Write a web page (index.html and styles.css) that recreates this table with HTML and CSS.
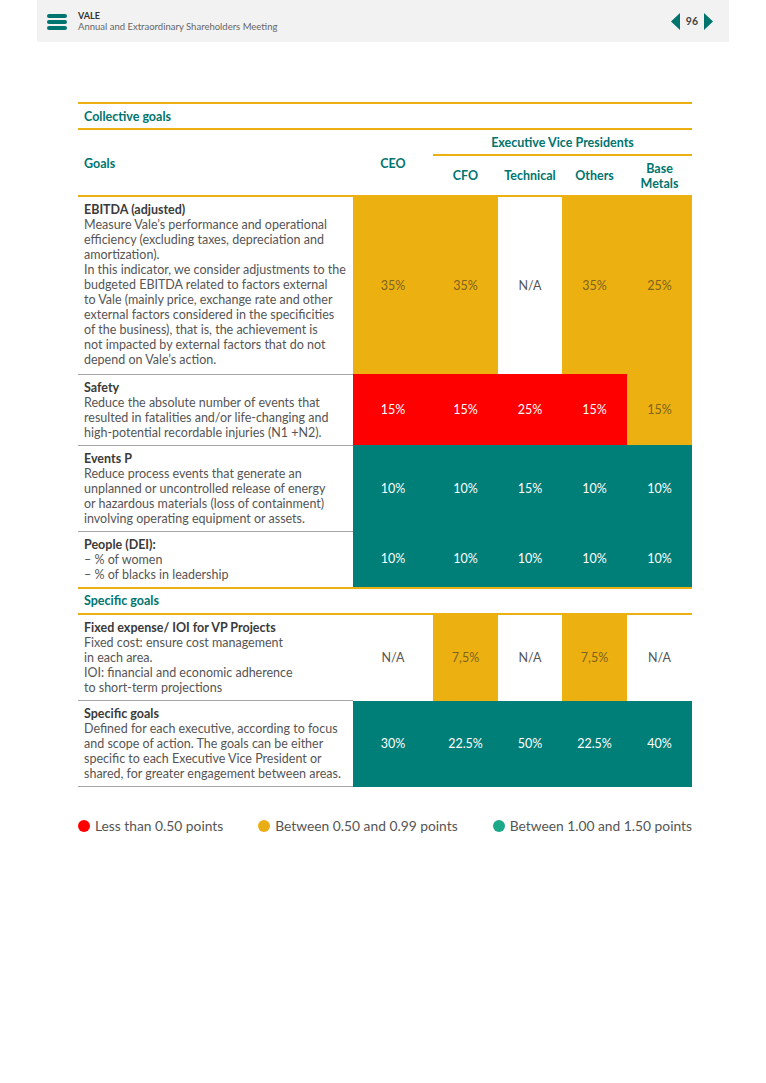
FILE: index.html
```html
<!DOCTYPE html>
<html lang="en">
<head>
<meta charset="utf-8">
<title>Vale - Goals</title>
<link rel="stylesheet" href="styles.css">
</head>
<body>
<header class="topbar">
  <div class="brand">
    <svg class="menu-icon" width="20" height="18" viewBox="0 0 20 18">
      <rect x="0" y="1" width="20" height="4" rx="2" fill="#00746f"/>
      <rect x="0" y="7" width="20" height="4" rx="2" fill="#00746f"/>
      <rect x="0" y="13" width="20" height="4" rx="2" fill="#00746f"/>
    </svg>
    <div class="brand-text">
      <div class="brand-name">VALE</div>
      <div class="brand-sub">Annual and Extraordinary Shareholders Meeting</div>
    </div>
  </div>
  <div class="pager">
    <svg width="9" height="17" viewBox="0 0 9 17"><polygon points="9,0 9,17 0,8.5" fill="#00746f"/></svg>
    <span class="page-num">96</span>
    <svg width="9" height="17" viewBox="0 0 9 17"><polygon points="0,0 0,17 9,8.5" fill="#00746f"/></svg>
  </div>
</header>

<main class="content">
  <table class="goals">
    <colgroup>
      <col class="c-goal"><col class="c-ceo"><col class="c-cfo"><col class="c-tech"><col class="c-oth"><col class="c-base">
    </colgroup>
    <tbody>
      <tr class="section">
        <td colspan="6">Collective goals</td>
      </tr>
      <tr class="head1">
        <th rowspan="2" class="h-goals">Goals</th>
        <th rowspan="2" class="h-ceo">CEO</th>
        <th colspan="4" class="h-evp">Executive Vice Presidents</th>
      </tr>
      <tr class="head2">
        <th>CFO</th><th>Technical</th><th>Others</th><th>Base<br>Metals</th>
      </tr>
      <tr class="r-ebitda">
        <td class="goal"><b>EBITDA (adjusted)</b><br>Measure Vale’s performance and operational<br>efficiency (excluding taxes, depreciation and<br>amortization).<br>In this indicator, we consider adjustments to the<br>budgeted EBITDA related to factors external<br>to Vale (mainly price, exchange rate and other<br>external factors considered in the specificities<br>of the business), that is, the achievement is<br>not impacted by external factors that do not<br>depend on Vale’s action.</td>
        <td class="v gold">35%</td><td class="v gold">35%</td><td class="v blank">N/A</td><td class="v gold">35%</td><td class="v gold">25%</td>
      </tr>
      <tr class="r-safety">
        <td class="goal"><b>Safety</b><br>Reduce the absolute number of events that<br>resulted in fatalities and/or life-changing and<br>high-potential recordable injuries (N1 +N2).</td>
        <td class="v red">15%</td><td class="v red">15%</td><td class="v red">25%</td><td class="v red">15%</td><td class="v gold">15%</td>
      </tr>
      <tr class="r-events">
        <td class="goal"><b>Events P</b><br>Reduce process events that generate an<br>unplanned or uncontrolled release of energy<br>or hazardous materials (loss of containment)<br>involving operating equipment or assets.</td>
        <td class="v teal">10%</td><td class="v teal">10%</td><td class="v teal">15%</td><td class="v teal">10%</td><td class="v teal">10%</td>
      </tr>
      <tr class="r-people">
        <td class="goal"><b>People (DEI):</b><br>– % of women<br>– % of blacks in leadership</td>
        <td class="v teal">10%</td><td class="v teal">10%</td><td class="v teal">10%</td><td class="v teal">10%</td><td class="v teal">10%</td>
      </tr>
      <tr class="section section-mid">
        <td colspan="6">Specific goals</td>
      </tr>
      <tr class="r-fixed">
        <td class="goal"><b>Fixed expense/ IOI for VP Projects</b><br>Fixed cost: ensure cost management<br>in each area.<br>IOI: financial and economic adherence<br>to short-term projections</td>
        <td class="v blank">N/A</td><td class="v gold">7,5%</td><td class="v blank">N/A</td><td class="v gold">7,5%</td><td class="v blank">N/A</td>
      </tr>
      <tr class="r-specific">
        <td class="goal"><b>Specific goals</b><br>Defined for each executive, according to focus<br>and scope of action. The goals can be either<br>specific to each Executive Vice President or<br>shared, for greater engagement between areas.</td>
        <td class="v teal">30%</td><td class="v teal">22.5%</td><td class="v teal">50%</td><td class="v teal">22.5%</td><td class="v teal">40%</td>
      </tr>
    </tbody>
  </table>

  <ul class="legend">
    <li><span class="dot dot-red"></span>Less than 0.50 points</li>
    <li><span class="dot dot-gold"></span>Between 0.50 and 0.99 points</li>
    <li><span class="dot dot-green"></span>Between 1.00 and 1.50 points</li>
  </ul>
</main>
</body>
</html>
```

FILE: styles.css
```css
* { box-sizing: border-box; }

html, body {
  margin: 0;
  padding: 0;
  background: #ffffff;
  font-family: Lato, "Open Sans", "Liberation Sans", sans-serif;
  color: #555555;
}

.topbar {
  margin: 0 37px;
  width: 692px;
  height: 42px;
  background: #f2f2f2;
  display: flex;
  align-items: center;
  justify-content: space-between;
  padding: 0 16px 0 10px;
}

.brand {
  display: flex;
  align-items: center;
  gap: 11px;
}

.menu-icon { display: block; margin-top: 2px; }

.brand-text {
  display: flex;
  flex-direction: column;
  line-height: 11px;
}

.brand-name {
  font-size: 9px;
  font-weight: 700;
  color: #333333;
}

.brand-sub {
  font-size: 9.5px;
  color: #666666;
}

.pager {
  display: flex;
  align-items: center;
  gap: 5px;
}

.pager svg { display: block; }

.page-num {
  font-size: 10.5px;
  font-weight: 700;
  color: #444444;
  padding: 0 1px;
}

.content {
  padding: 60px 74px 0 78px;
}

.goals {
  width: 614px;
  border-collapse: collapse;
  table-layout: fixed;
  font-size: 12.5px;
  line-height: 15px;
}

.c-goal { width: 275px; }
.c-ceo { width: 80px; }
.c-cfo { width: 65px; }
.c-tech { width: 64px; }
.c-oth { width: 65px; }
.c-base { width: 65px; }

.goals td, .goals th {
  padding: 0;
}

.goals .section td {
  height: 26px;
  border-top: 2px solid #ecb111;
  border-bottom: 2px solid #ecb111;
  padding: 0 6px;
  font-weight: 700;
  color: #00746f;
  vertical-align: middle;
}

.goals th {
  font-weight: 700;
  color: #00746f;
  text-align: center;
  vertical-align: middle;
}

.goals .head1 th.h-goals {
  text-align: left;
  padding-left: 6px;
  padding-top: 2px;
}

.goals .head1 th.h-ceo { padding-top: 2px; }

.goals .head1 th.h-evp {
  height: 26px;
  border-bottom: 2px solid #ecb111;
}

.goals .head2 th {
  height: 41px;
}

.head2 { border-bottom: 2px solid #ecb111; }

.goals .goal {
  padding: 5px 2px 5px 6px;
  border-bottom: 1px solid #a6a6a6;
  vertical-align: top;
  color: #555555;
  white-space: nowrap;
  overflow: hidden;
}

.r-ebitda { height: 178px; }
.r-safety { height: 71px; }
.r-events { height: 86px; }
.r-people { height: 56px; }
.r-fixed { height: 87px; }
.r-specific { height: 86px; }

.goal b {
  color: #3a3a3a;
  font-weight: 700;
}

.goals .r-people .goal { border-bottom: none; }

.goals .v {
  text-align: center;
  vertical-align: middle;
  font-weight: 400;
}

.gold { background: #ecb111; color: #7d6320; }
.red { background: #ff0000; color: #ffffff; }
.teal { background: #007e78; color: #ffffff; }
.blank { background: #ffffff; color: #555555; }

.legend {
  list-style: none;
  margin: 31px 0 0 0;
  padding: 0;
  width: 614px;
  display: flex;
  justify-content: space-between;
  font-size: 13.8px;
  line-height: 16px;
  color: #555555;
}

.legend li {
  display: flex;
  align-items: center;
  gap: 5px;
}

.dot {
  display: inline-block;
  width: 12px;
  height: 12px;
  border-radius: 50%;
}

.dot-red { background: #ff0000; }
.dot-gold { background: #e9ad16; }
.dot-green { background: #1ca98a; }
```
